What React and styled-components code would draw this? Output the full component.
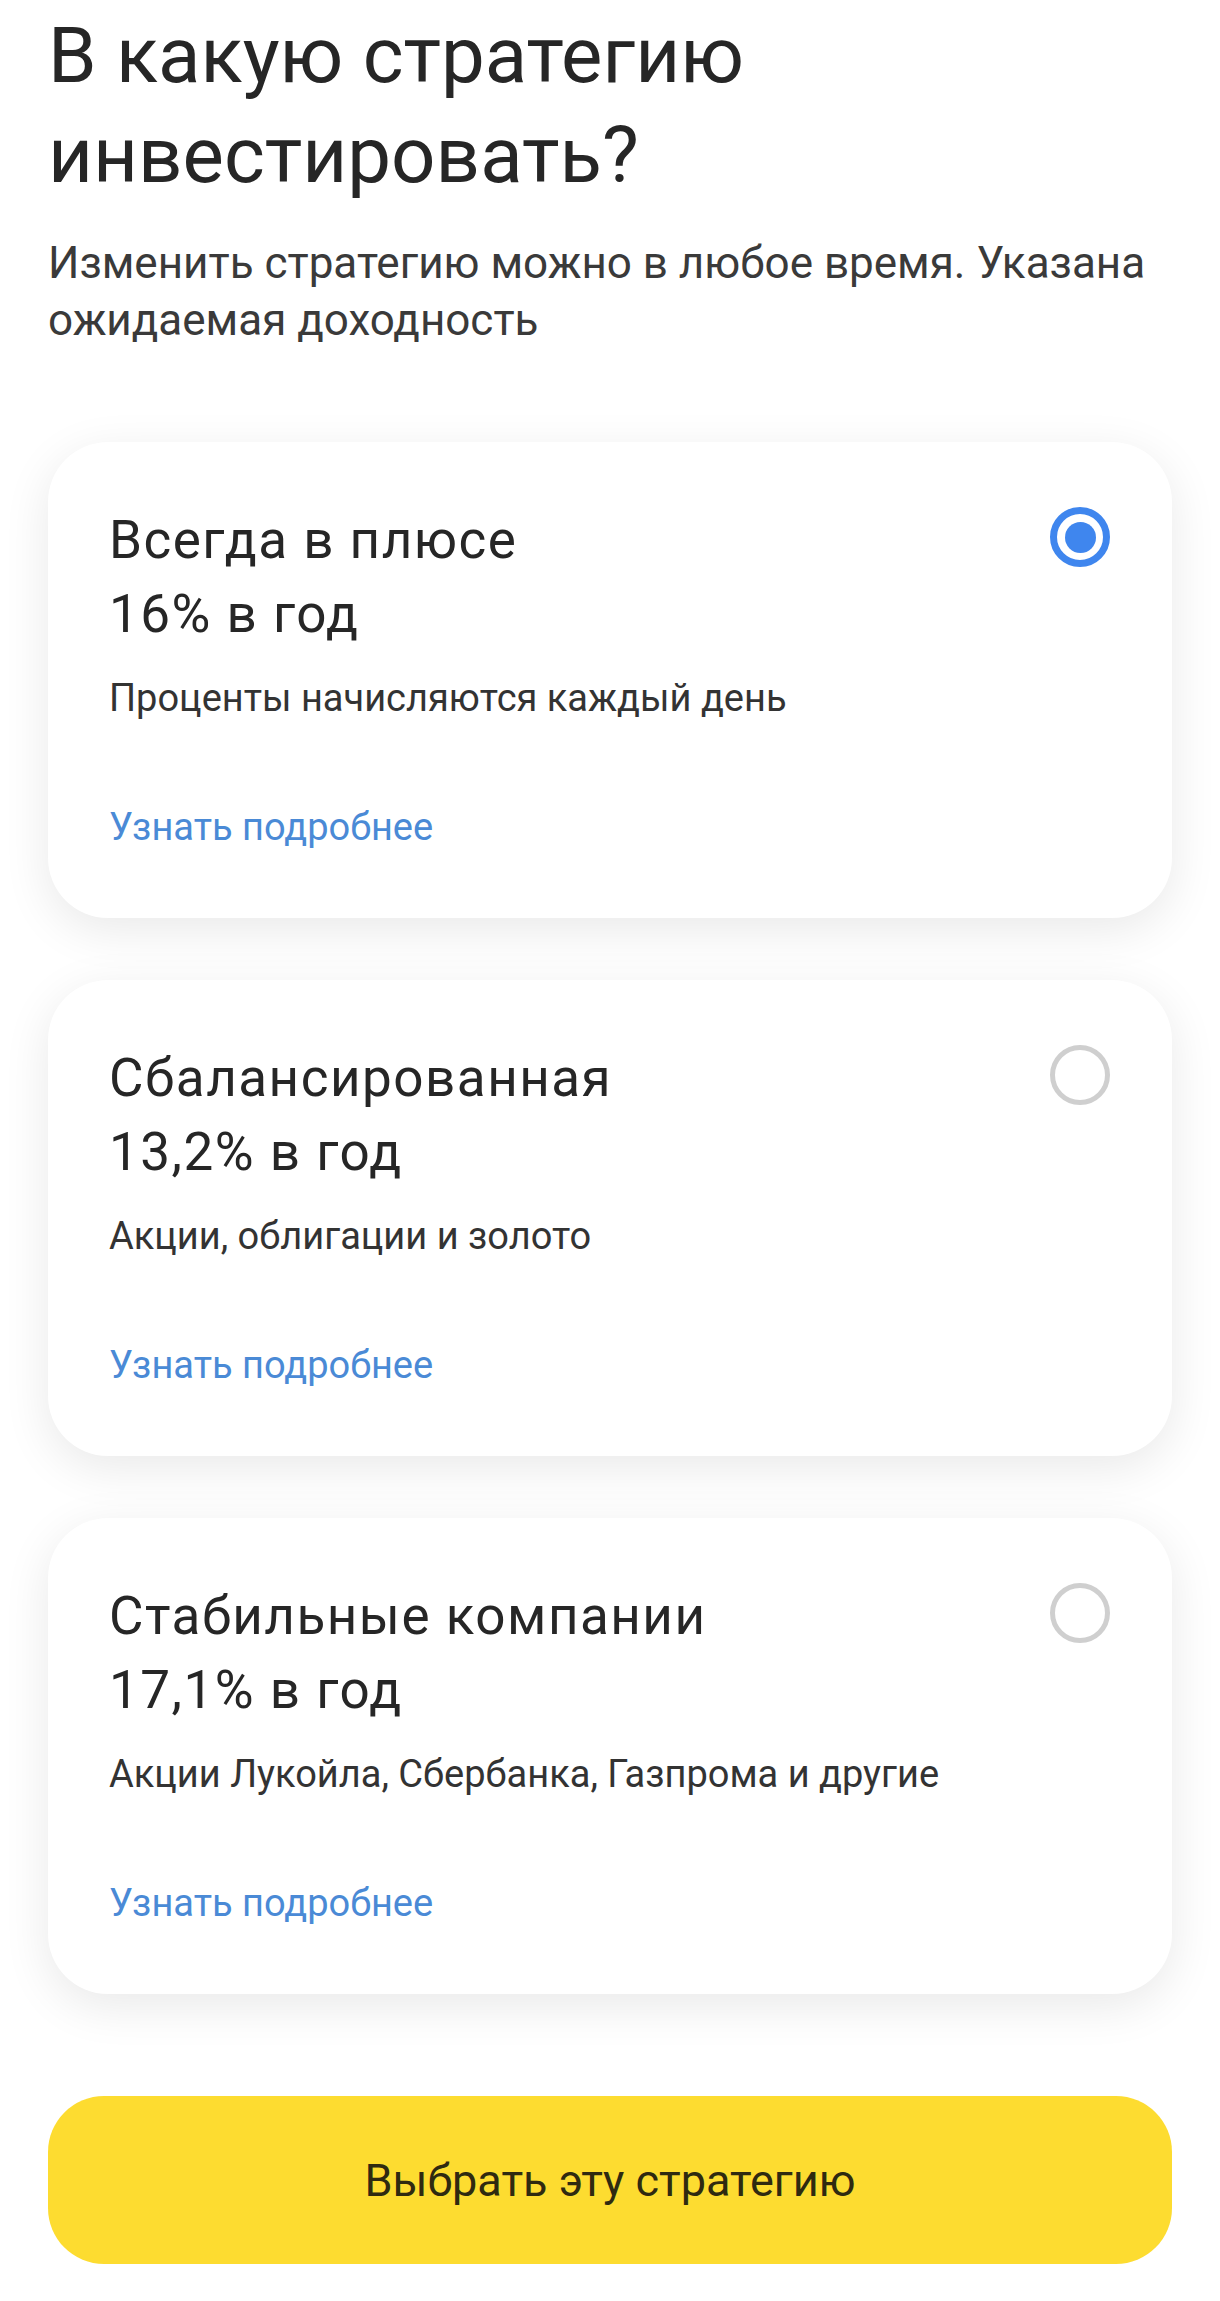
import React from "react"
import styled, { createGlobalStyle } from "styled-components"

const Global = createGlobalStyle`
  html, body {
    margin: 0;
    padding: 0;
    background: #ffffff;
  }
  body {
    font-family: Roboto, "Noto Sans", Arial, sans-serif;
    color: #262626;
  }
`

const Page = styled.div`
  padding: 6px 48px 39px;
  display: flex;
  flex-direction: column;
`

const Heading = styled.h1`
  margin: 0;
  font-size: 78px;
  line-height: 100px;
  font-weight: 400;
  color: #262626;
`

const Lead = styled.p`
  margin: 29px 0 0;
  font-size: 44px;
  line-height: 57px;
  color: #3a3a3a;
`

const List = styled.div`
  margin-top: 93px;
  display: flex;
  flex-direction: column;
  gap: 62px;
`

const Card = styled.div`
  background: #fff;
  border-radius: 60px;
  padding: 61px 62px 66px 61px;
  box-shadow: 0 12px 48px rgba(0, 0, 0, 0.09);
  display: flex;
  justify-content: space-between;
  align-items: flex-start;
`

const Body = styled.div`
  display: flex;
  flex-direction: column;
`

const Title = styled.div`
  font-size: 53px;
  line-height: 74px;
  letter-spacing: 1.5px;
  color: #262626;
`

const Desc = styled.div`
  margin-top: 22px;
  font-size: 38px;
  line-height: 50px;
  color: #333;
`

const More = styled.a`
  margin-top: 79px;
  font-size: 38px;
  line-height: 50px;
  color: #4a8ad6;
  text-decoration: none;
`

const Radio = styled.span`
  flex: none;
  box-sizing: border-box;
  width: 60px;
  height: 60px;
  margin-top: 4px;
  border-radius: 50%;
  border: ${p => (p.checked ? "7px solid #3f86ee" : "5px solid #cfcfcf")};
  display: flex;
  align-items: center;
  justify-content: center;

  &::after {
    content: "";
    width: 31px;
    height: 31px;
    border-radius: 50%;
    background: #3f86ee;
    display: ${p => (p.checked ? "block" : "none")};
  }
`

const Button = styled.button`
  margin-top: 102px;
  height: 168px;
  border: none;
  border-radius: 56px;
  background: #fddc30;
  color: #2f2a10;
  font-family: inherit;
  font-size: 45px;
  cursor: pointer;
`

const strategies = [
  { name: "Всегда в плюсе", rate: "16% в год", desc: "Проценты начисляются каждый день", checked: true },
  { name: "Сбалансированная", rate: "13,2% в год", desc: "Акции, облигации и золото" },
  { name: "Стабильные компании", rate: "17,1% в год", desc: "Акции Лукойла, Сбербанка, Газпрома и другие" },
]

const App = () => {
  return (
    <>
      <Global />
      <Page>
        <Heading>
          В какую стратегию
          <br />
          инвестировать?
        </Heading>
        <Lead>
          Изменить стратегию можно в любое время. Указана ожидаемая доходность
        </Lead>
        <List>
          {strategies.map(s => (
            <Card key={s.name}>
              <Body>
                <Title>
                  {s.name}
                  <br />
                  {s.rate}
                </Title>
                <Desc>{s.desc}</Desc>
                <More href="#">Узнать подробнее</More>
              </Body>
              <Radio checked={s.checked} />
            </Card>
          ))}
        </List>
        <Button>Выбрать эту стратегию</Button>
      </Page>
    </>
  )
}

export default App
